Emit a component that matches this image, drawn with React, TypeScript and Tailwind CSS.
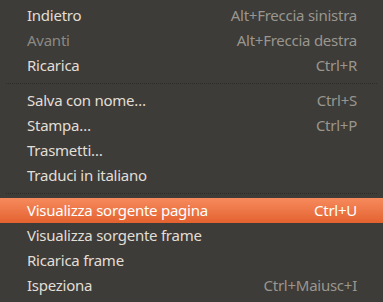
type Item = { label: string; shortcut?: string; disabled?: boolean; active?: boolean };

const groups: Item[][] = [
  [
    { label: 'Indietro', shortcut: 'Alt+Freccia sinistra' },
    { label: 'Avanti', shortcut: 'Alt+Freccia destra', disabled: true },
    { label: 'Ricarica', shortcut: 'Ctrl+R' },
  ],
  [
    { label: 'Salva con nome…', shortcut: 'Ctrl+S' },
    { label: 'Stampa…', shortcut: 'Ctrl+P' },
    { label: 'Trasmetti…' },
    { label: 'Traduci in italiano' },
  ],
  [
    { label: 'Visualizza sorgente pagina', shortcut: 'Ctrl+U', active: true },
    { label: 'Visualizza sorgente frame' },
    { label: 'Ricarica frame' },
    { label: 'Ispeziona', shortcut: 'Ctrl+Maiusc+I' },
  ],
];

function Row({ item }: { item: Item }) {
  const bg = item.active ? 'bg-gradient-to-b from-[#f68a5c] to-[#e4622f]' : '';
  const label = item.disabled ? 'text-[#8c8983]' : item.active ? 'text-white' : 'text-[#e2ded6]';
  const sc = item.active ? 'text-white' : 'text-[#9a968f]';
  return (
    <div className={`flex h-[25px] items-center justify-between pl-[27px] pr-[26px] ${bg}`}>
      <span className={label}>{item.label}</span>
      {item.shortcut && <span className={sc}>{item.shortcut}</span>}
    </div>
  );
}

export default function App() {
  return (
    <div className="w-[383px] h-[302px] overflow-hidden bg-[#3d3c38] pt-[3px] text-[15px] leading-none tracking-[-0.25px] font-['Noto_Sans',sans-serif]">
      {groups.map((g, gi) => (
        <div key={gi}>
          {gi > 0 && (
            <div className="flex h-[10px] items-center px-[6px]">
              <div className="w-full border-t border-dotted border-[#2c2b28]" />
            </div>
          )}
          {g.map((item) => (
            <Row key={item.label} item={item} />
          ))}
        </div>
      ))}
    </div>
  );
}
